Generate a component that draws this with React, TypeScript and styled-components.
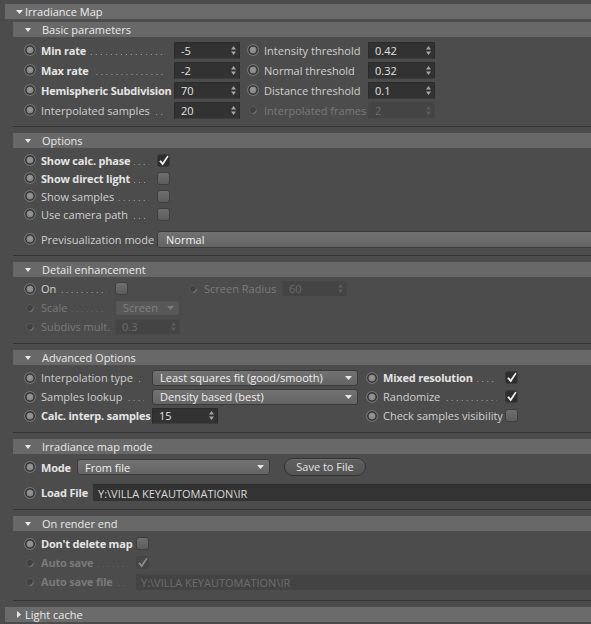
import React from "react";
import styled, { createGlobalStyle } from "styled-components";

const GlobalStyle = createGlobalStyle`
  html, body { margin: 0; padding: 0; background: #4c4c4c; overflow: hidden; }
  body {
    font-family: "Open Sans", "Noto Sans", "Liberation Sans", sans-serif;
    font-size: 11px;
    color: #d2d2d2;
  }
  * { box-sizing: border-box; }
`;

const Page = styled.div`
  width: 591px;
  height: 624px;
  overflow: hidden;
  background: #4c4c4c;
  padding: 4px 0 0 5px;
`;

const GroupHeader = styled.div<{ $pl?: number }>`
  height: 15px;
  background: #6b6b6b;
  display: flex;
  align-items: center;
  padding-left: ${(p) => p.$pl || 11}px;
  color: #ececec;
  white-space: nowrap;
`;

const GroupTitle = styled.span<{ $ml: number }>`
  margin-left: ${(p) => p.$ml}px;
  line-height: 15px;
`;

const Body = styled.div`
  padding-left: 8px;
  margin-top: 3px;
`;

const SectionHeader = styled.div`
  height: 15px;
  background: #686868;
  display: flex;
  align-items: center;
  padding-left: 12px;
  color: #e8e8e8;
  white-space: nowrap;
`;

const SectionTitle = styled.span`
  margin-left: 11px;
  line-height: 15px;
`;

const SectionBody = styled.div<{ $pt: number; $pb: number }>`
  padding: ${(p) => p.$pt}px 0 ${(p) => p.$pb}px 11px;
  display: flex;
  flex-direction: column;
`;

const Separator = styled.div`
  height: 1px;
  background: #343434;
  margin-bottom: 6px;
`;

const Row = styled.div<{ $h: number; $mt?: number }>`
  display: flex;
  align-items: center;
  height: ${(p) => p.$h}px;
  margin-top: ${(p) => p.$mt || 0}px;
  white-space: nowrap;
`;

const FieldBox = styled.div<{ $gap?: number }>`
  display: flex;
  align-items: center;
  flex-shrink: 0;
  margin-left: ${(p) => p.$gap || 0}px;
`;

const RadioDot = styled.span`
  width: 12px;
  height: 12px;
  flex-shrink: 0;
  margin-right: 5px;
  border-radius: 50%;
  border: 1px solid #737373;
  box-shadow: inset 0 0 0 1.5px #2e2e2e;
  background: radial-gradient(circle at 50% 45%, #9a9a9a 0%, #858585 45%, #6e6e6e 100%);
`;

const RadioOffSlot = styled.span`
  width: 12px;
  height: 12px;
  flex-shrink: 0;
  margin-right: 5px;
  display: flex;
  align-items: center;
  justify-content: center;
`;

const Label = styled.div<{ $w: number; $bold?: boolean; $disabled?: boolean }>`
  width: ${(p) => p.$w}px;
  flex-shrink: 0;
  display: flex;
  align-items: baseline;
  overflow: hidden;
  white-space: nowrap;
  font-weight: ${(p) => (p.$bold ? 700 : 400)};
  letter-spacing: ${(p) => (p.$bold ? "-0.2px" : "0")};
  color: ${(p) => (p.$disabled ? "#7a7a7a" : p.$bold ? "#e4e4e4" : "#d0d0d0")};
`;

const Leader = styled.span<{ $disabled?: boolean }>`
  flex: 1;
  min-width: 0;
  height: 1px;
  margin: 0 8px 0 4px;
  background-image: linear-gradient(
    to right,
    ${(p) => (p.$disabled ? "#6a6a6a" : "#a2a2a2")} 1px,
    transparent 1px
  );
  background-size: 5px 1px;
  background-repeat: repeat-x;
  background-position: right bottom;
`;

const NumBox = styled.div<{ $w: number; $h?: number; $disabled?: boolean }>`
  width: ${(p) => p.$w}px;
  height: ${(p) => p.$h || 16}px;
  flex-shrink: 0;
  display: flex;
  align-items: center;
  justify-content: space-between;
  padding: 0 3px 0 6px;
  background: ${(p) => (p.$disabled ? "#444444" : "#323232")};
  border: 1px solid ${(p) => (p.$disabled ? "#474747" : "#2b2b2b")};
  border-bottom-color: ${(p) => (p.$disabled ? "#4b4b4b" : "#3d3d3d")};
  color: ${(p) => (p.$disabled ? "#6c6c6c" : "#e2e2e2")};
`;

const DropBox = styled.div<{ $w: number; $h?: number; $disabled?: boolean }>`
  width: ${(p) => p.$w}px;
  height: ${(p) => p.$h || 16}px;
  flex-shrink: 0;
  display: flex;
  align-items: center;
  justify-content: space-between;
  padding: 0 5px 0 7px;
  border-radius: 3px;
  background: ${(p) => (p.$disabled ? "#585858" : "linear-gradient(#727272, #646464)")};
  border: 1px solid ${(p) => (p.$disabled ? "#4a4a4a" : "#3a3a3a")};
  color: ${(p) => (p.$disabled ? "#808080" : "#f0f0f0")};
`;

const WideDrop = styled(DropBox)`
  border-radius: 3px 0 0 3px;
  padding-left: 8px;
`;

const PillButton = styled.button`
  margin-left: 14px;
  width: 82px;
  height: 18px;
  flex-shrink: 0;
  padding: 0;
  border-radius: 9px;
  border: 1px solid #333333;
  background: linear-gradient(#5f5f5f, #545454);
  box-shadow: inset 0 1px 0 rgba(255, 255, 255, 0.08);
  color: #e4e4e4;
  font: inherit;
  line-height: 16px;
`;

const PathBox = styled.div<{ $h?: number; $disabled?: boolean }>`
  width: 520px;
  height: ${(p) => p.$h || 16}px;
  flex-shrink: 0;
  display: flex;
  align-items: center;
  padding-left: 5px;
  background: ${(p) => (p.$disabled ? "#434343" : "#333333")};
  border-top: 1px solid ${(p) => (p.$disabled ? "#474747" : "#2a2a2a")};
  color: ${(p) => (p.$disabled ? "#6e6e6e" : "#dadada")};
`;

const CheckBox = styled.span<{ $checked?: boolean; $disabled?: boolean }>`
  width: 13px;
  height: 13px;
  flex-shrink: 0;
  border-radius: 3px;
  display: flex;
  align-items: center;
  justify-content: center;
  background: ${(p) =>
    p.$checked
      ? p.$disabled
        ? "#464646"
        : "#2e2e2e"
      : p.$disabled
      ? "#555555"
      : "linear-gradient(#6f6f6f, #5c5c5c)"};
  border: 1px solid ${(p) => (p.$checked ? (p.$disabled ? "#444" : "#3a3a3a") : "#3e3e3e")};
`;

const DownTri = ({ w, h, color }: { w: number; h: number; color: string }) => (
  <svg width={w} height={h} viewBox={`0 0 ${w} ${h}`} style={{ flexShrink: 0 }}>
    <path d={`M0 0 H${w} L${w / 2} ${h} Z`} fill={color} />
  </svg>
);

const RightTri = () => (
  <svg width="4" height="7" viewBox="0 0 4 7" style={{ flexShrink: 0 }}>
    <path d="M0 0 L4 3.5 L0 7 Z" fill="#e6e6e6" />
  </svg>
);

const Spinner = ({ disabled }: { disabled?: boolean }) => (
  <svg width="5" height="9" viewBox="0 0 5 9" style={{ flexShrink: 0 }}>
    <path d="M2.5 0 L5 3.6 H0 Z M2.5 9 L5 5.4 H0 Z" fill={disabled ? "#5c5c5c" : "#a4a4a4"} />
  </svg>
);

const CheckMark = ({ color }: { color: string }) => (
  <svg width="11" height="11" viewBox="0 0 11 11">
    <path d="M1.2 6.2 L2.9 5.2 L4.5 7.6 L9.4 0.6 L10.6 1.5 L4.8 10.4 Z" fill={color} />
  </svg>
);

const RadioOff = () => (
  <RadioOffSlot>
    <svg width="10" height="10" viewBox="0 0 10 10">
      <circle cx="5" cy="5" r="3.6" fill="#404040" stroke="#5a5a5a" strokeWidth="1" />
      <path d="M8.2 5.2 A3.3 3.3 0 0 1 4.8 8.4" stroke="#727272" strokeWidth="1.2" fill="none" />
    </svg>
  </RadioOffSlot>
);

type FieldProps = {
  label: string;
  w: number;
  bold?: boolean;
  disabled?: boolean;
  gap?: number;
  children?: React.ReactNode;
};

const Field = ({ label, w, bold, disabled, gap, children }: FieldProps) => (
  <FieldBox $gap={gap}>
    {disabled ? <RadioOff /> : <RadioDot />}
    <Label $w={w} $bold={bold} $disabled={disabled}>
      <span>{label}</span>
      <Leader $disabled={disabled} />
    </Label>
    {children}
  </FieldBox>
);

const Num = ({ value, w, h, disabled }: { value: string; w: number; h?: number; disabled?: boolean }) => (
  <NumBox $w={w} $h={h} $disabled={disabled}>
    <span>{value}</span>
    <Spinner disabled={disabled} />
  </NumBox>
);

const Drop = ({ value, w, disabled }: { value: string; w: number; disabled?: boolean }) => (
  <DropBox $w={w} $disabled={disabled}>
    <span>{value}</span>
    <DownTri w={7} h={4} color={disabled ? "#7a7a7a" : "#e8e8e8"} />
  </DropBox>
);

const Check = ({ checked, disabled }: { checked?: boolean; disabled?: boolean }) => (
  <CheckBox $checked={checked} $disabled={disabled}>
    {checked && <CheckMark color={disabled ? "#8a8a8a" : "#f2f2f2"} />}
  </CheckBox>
);

const Section = ({
  title,
  pt,
  pb,
  children,
}: {
  title: string;
  pt: number;
  pb: number;
  children: React.ReactNode;
}) => (
  <>
    <SectionHeader>
      <DownTri w={6} h={4} color="#eaeaea" />
      <SectionTitle>{title}</SectionTitle>
    </SectionHeader>
    <SectionBody $pt={pt} $pb={pb}>
      {children}
    </SectionBody>
    <Separator />
  </>
);

export default function App() {
  return (
    <>
      <GlobalStyle />
      <Page>
        <GroupHeader>
          <DownTri w={7} h={4} color="#eeeeee" />
          <GroupTitle $ml={2}>Irradiance Map</GroupTitle>
        </GroupHeader>
        <Body>
          <Section title="Basic parameters" pt={3} pb={6}>
            <Row $h={20}>
              <Field label="Min rate" w={133} bold>
                <Num value="-5" w={66} h={17} />
              </Field>
              <Field label="Intensity threshold" w={104} gap={7}>
                <Num value="0.42" w={67} h={17} />
              </Field>
            </Row>
            <Row $h={20}>
              <Field label="Max rate" w={133} bold>
                <Num value="-2" w={66} h={17} />
              </Field>
              <Field label="Normal threshold" w={104} gap={7}>
                <Num value="0.32" w={67} h={17} />
              </Field>
            </Row>
            <Row $h={20}>
              <Field label="Hemispheric Subdivision" w={133} bold>
                <Num value="70" w={66} h={17} />
              </Field>
              <Field label="Distance threshold" w={104} gap={7}>
                <Num value="0.1" w={67} h={17} />
              </Field>
            </Row>
            <Row $h={20}>
              <Field label="Interpolated samples" w={133}>
                <Num value="20" w={66} h={17} />
              </Field>
              <Field label="Interpolated frames" w={104} gap={7} disabled>
                <Num value="2" w={67} h={17} disabled />
              </Field>
            </Row>
          </Section>

          <Section title="Options" pt={3} pb={7}>
            <Row $h={18}>
              <Field label="Show calc. phase" w={116} bold>
                <Check checked />
              </Field>
            </Row>
            <Row $h={18}>
              <Field label="Show direct light" w={116} bold>
                <Check />
              </Field>
            </Row>
            <Row $h={18}>
              <Field label="Show samples" w={116}>
                <Check />
              </Field>
            </Row>
            <Row $h={18}>
              <Field label="Use camera path" w={116}>
                <Check />
              </Field>
            </Row>
            <Row $h={18} $mt={7}>
              <Field label="Previsualization mode" w={116}>
                <WideDrop $w={460} $h={17}>
                  <span>Normal</span>
                </WideDrop>
              </Field>
            </Row>
          </Section>

          <Section title="Detail enhancement" pt={2} pb={7}>
            <Row $h={19}>
              <Field label="On" w={74}>
                <Check />
              </Field>
              <Field label="Screen Radius" w={78} gap={59} disabled>
                <Num value="60" w={65} disabled />
              </Field>
            </Row>
            <Row $h={19}>
              <Field label="Scale" w={74} disabled>
                <Drop value="Screen" w={65} disabled />
              </Field>
            </Row>
            <Row $h={19}>
              <Field label="Subdivs mult." w={74} disabled>
                <Num value="0.3" w={65} disabled />
              </Field>
            </Row>
          </Section>

          <Section title="Advanced Options" pt={3} pb={7}>
            <Row $h={19}>
              <Field label="Interpolation type" w={111}>
                <Drop value="Least squares fit (good/smooth)" w={206} />
              </Field>
              <Field label="Mixed resolution" w={122} gap={8} bold>
                <Check checked />
              </Field>
            </Row>
            <Row $h={19}>
              <Field label="Samples lookup" w={111}>
                <Drop value="Density based (best)" w={206} />
              </Field>
              <Field label="Randomize" w={122} gap={8}>
                <Check checked />
              </Field>
            </Row>
            <Row $h={19}>
              <Field label="Calc. interp. samples" w={111} bold>
                <Num value="15" w={66} />
              </Field>
              <Field label="Check samples visibility" w={122} gap={148}>
                <Check />
              </Field>
            </Row>
          </Section>

          <Section title="Irradiance map mode" pt={3} pb={7}>
            <Row $h={20}>
              <Field label="Mode" w={36} bold>
                <Drop value="From file" w={193} />
              </Field>
              <PillButton type="button">Save to File</PillButton>
            </Row>
            <Row $h={19} $mt={6}>
              <Field label="Load File" w={52} bold>
                <PathBox $h={17}>Y:\VILLA KEYAUTOMATION\IR</PathBox>
              </Field>
            </Row>
          </Section>

          <Section title="On render end" pt={3} pb={9}>
            <Row $h={19}>
              <Field label="Don't delete map" w={95} bold>
                <Check />
              </Field>
            </Row>
            <Row $h={19}>
              <Field label="Auto save" w={95} bold disabled>
                <Check checked disabled />
              </Field>
            </Row>
            <Row $h={19}>
              <Field label="Auto save file" w={95} bold disabled>
                <PathBox $disabled>Y:\VILLA KEYAUTOMATION\IR</PathBox>
              </Field>
            </Row>
          </Section>
        </Body>
        <GroupHeader $pl={12}>
          <RightTri />
          <GroupTitle $ml={4}>Light cache</GroupTitle>
        </GroupHeader>
      </Page>
    </>
  );
}
